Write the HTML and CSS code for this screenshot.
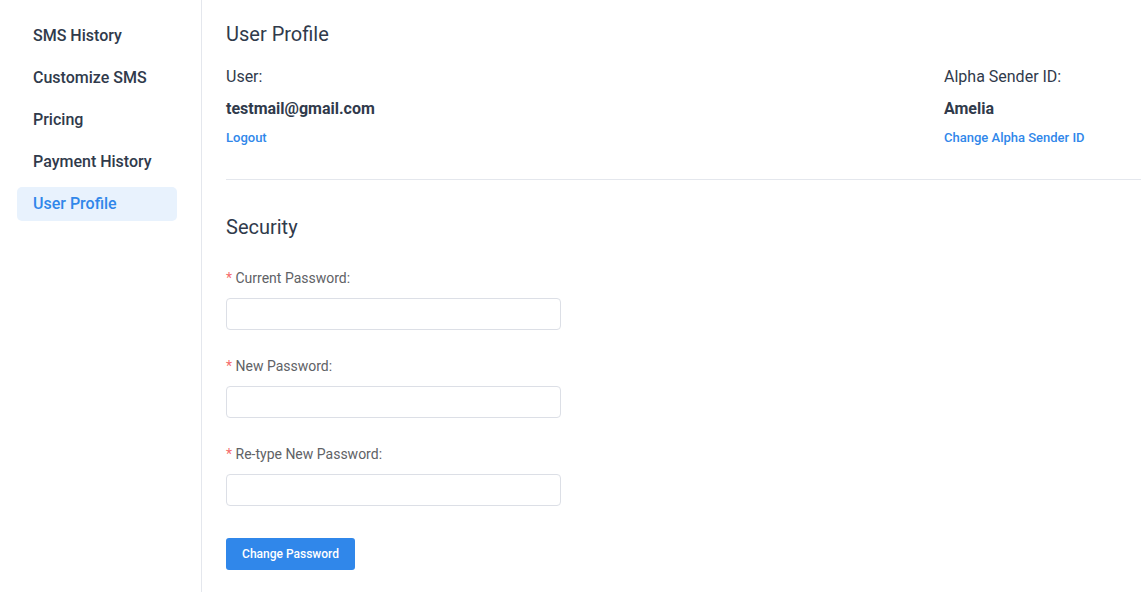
FILE: index.html
```html
<!DOCTYPE html>
<html>
<head>
<meta charset="utf-8">
<link rel="stylesheet" href="styles.css">
</head>
<body>
<div class="layout">
  <aside class="sidebar">
    <a class="nav-item">SMS History</a>
    <a class="nav-item">Customize SMS</a>
    <a class="nav-item">Pricing</a>
    <a class="nav-item">Payment History</a>
    <a class="nav-item active">User Profile</a>
  </aside>
  <main class="main">
    <h2 class="title">User Profile</h2>
    <div class="info-row">
      <div class="info-col">
        <div class="info-label">User:</div>
        <div class="info-value">testmail@gmail.com</div>
        <a class="link">Logout</a>
      </div>
      <div class="info-col right">
        <div class="info-label">Alpha Sender ID:</div>
        <div class="info-value">Amelia</div>
        <a class="link">Change Alpha Sender ID</a>
      </div>
    </div>
    <hr class="divider">
    <h2 class="title security">Security</h2>
    <form class="form">
      <div class="field">
        <label class="label"><span class="req">*</span> Current Password:</label>
        <input class="input" type="password">
      </div>
      <div class="field">
        <label class="label"><span class="req">*</span> New Password:</label>
        <input class="input" type="password">
      </div>
      <div class="field">
        <label class="label"><span class="req">*</span> Re-type New Password:</label>
        <input class="input" type="password">
      </div>
      <button type="button" class="btn">Change Password</button>
    </form>
  </main>
</div>
</body>
</html>
```
FILE: styles.css
```css
* { box-sizing: border-box; }
html, body { margin: 0; padding: 0; background: #fff; }
body {
  font-family: Roboto, "Liberation Sans", sans-serif;
  color: #303a4b;
  width: 1141px;
  height: 592px;
  overflow: hidden;
}
.layout { display: flex; height: 592px; }
.sidebar {
  width: 202px;
  flex-shrink: 0;
  border-right: 1px solid #e4e7ed;
  padding: 19px 24px 0 17px;
  display: flex;
  flex-direction: column;
  gap: 8px;
}
.nav-item {
  display: block;
  height: 34px;
  line-height: 33px;
  padding-left: 16px;
  border-radius: 5px;
  font-size: 16px;
  font-weight: 500;
  color: #303a4b;
}
.nav-item.active {
  background: #e8f2fd;
  color: #3087ea;
}
.main {
  flex: 1;
  padding: 20px 0 0 24px;
}
.title {
  margin: 0;
  font-size: 20px;
  font-weight: 400;
  line-height: 28px;
  color: #303a4b;
}
.info-row {
  display: flex;
  justify-content: space-between;
  margin-top: 19px;
}
.info-col { display: flex; flex-direction: column; }
.info-col.right { width: 197px; }
.info-label { font-size: 16px; line-height: 20px; color: #303a4b; }
.info-value { font-size: 16px; font-weight: 700; line-height: 20px; margin-top: 12px; }
.link {
  font-size: 13px;
  font-weight: 500;
  color: #3087ea;
  line-height: 16px;
  margin-top: 11px;
}
.divider {
  border: 0;
  border-top: 1px solid #e4e7ed;
  margin: 33px 0 0 0;
}
.security { margin-top: 33px; }
.form { margin-top: 29px; display: flex; flex-direction: column; }
.field { display: flex; flex-direction: column; margin-bottom: 28px; }
.label {
  font-size: 14px;
  color: #606266;
  line-height: 16px;
  margin-bottom: 12px;
}
.req { color: #f56c6c; }
.input {
  width: 335px;
  height: 32px;
  border: 1px solid #dcdfe6;
  border-radius: 4px;
  background: #fff;
  outline: none;
  padding: 0 12px;
}
.btn {
  width: 129px;
  height: 32px;
  background: #3087ea;
  color: #fff;
  border: 0;
  border-radius: 3px;
  font-family: Roboto, "Liberation Sans", sans-serif;
  font-size: 12px;
  font-weight: 500;
  margin-top: 4px;
  padding: 0;
}
```
